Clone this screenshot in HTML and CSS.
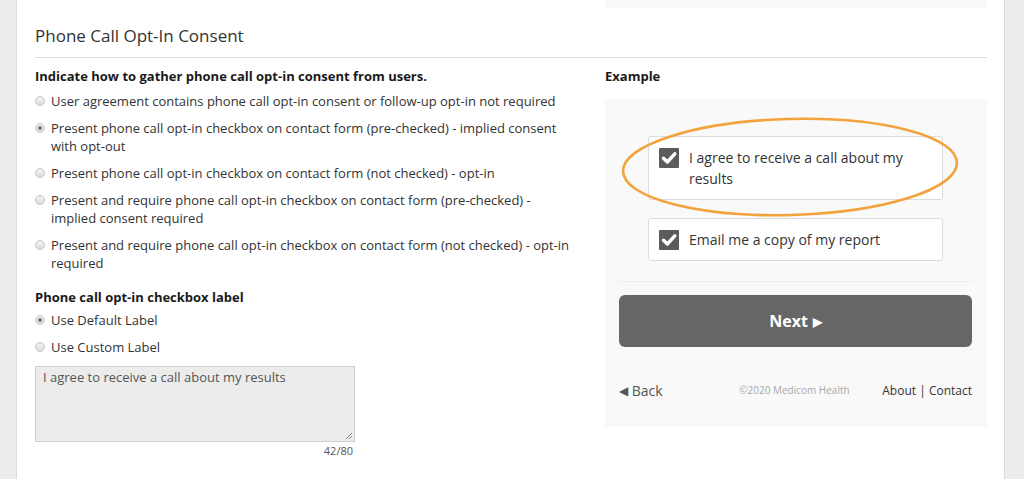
FILE: index.html
```html
<!DOCTYPE html>
<html>
<head>
<meta charset="utf-8">
<link rel="stylesheet" href="styles.css">
</head>
<body>
<div class="page">
  <div class="top-row">
    <div class="top-spacer"></div>
    <div class="prev-box"></div>
  </div>
  <h2 class="section-title">Phone Call Opt-In Consent</h2>
  <div class="columns">
    <div class="left-col">
      <div class="field-title">Indicate how to gather phone call opt-in consent from users.</div>
      <div class="radio-item"><span class="radio"></span><span class="radio-text">User agreement contains phone call opt-in consent or follow-up opt-in not required</span></div>
      <div class="radio-item"><span class="radio checked"></span><span class="radio-text">Present phone call opt-in checkbox on contact form (pre-checked) - implied consent with opt-out</span></div>
      <div class="radio-item"><span class="radio"></span><span class="radio-text">Present phone call opt-in checkbox on contact form (not checked) - opt-in</span></div>
      <div class="radio-item"><span class="radio"></span><span class="radio-text">Present and require phone call opt-in checkbox on contact form (pre-checked) - implied consent required</span></div>
      <div class="radio-item"><span class="radio"></span><span class="radio-text">Present and require phone call opt-in checkbox on contact form (not checked) - opt-in required</span></div>

      <div class="field-title second">Phone call opt-in checkbox label</div>
      <div class="radio-item tight"><span class="radio checked"></span><span class="radio-text">Use Default Label</span></div>
      <div class="radio-item"><span class="radio"></span><span class="radio-text">Use Custom Label</span></div>
      <div class="textarea-wrap">
        <div class="textarea">I agree to receive a call about my results<span class="grip"></span></div>
        <div class="counter">42/80</div>
      </div>
    </div>
    <div class="right-col">
      <div class="field-title example-title">Example</div>
      <div class="example-box">
        <div class="check-card">
          <span class="checkbox"><svg viewBox="0 0 20 20" width="20" height="20"><path d="M4.5 10.2 L8.4 14 L15.8 5.8" fill="none" stroke="#fff" stroke-width="3.4" stroke-linecap="round" stroke-linejoin="round"/></svg></span>
          <span class="check-text">I agree to receive a call about my results</span>
        </div>
        <div class="check-card">
          <span class="checkbox"><svg viewBox="0 0 20 20" width="20" height="20"><path d="M4.5 10.2 L8.4 14 L15.8 5.8" fill="none" stroke="#fff" stroke-width="3.4" stroke-linecap="round" stroke-linejoin="round"/></svg></span>
          <span class="check-text">Email me a copy of my report</span>
        </div>
        <div class="separator"></div>
        <div class="next-btn">Next <span class="tri">&#9654;</span></div>
        <div class="footer">
          <span class="back"><span class="tri-back">&#9664;</span> Back</span>
          <span class="copy">&copy;2020 Medicom Health</span>
          <span class="links">About | Contact</span>
        </div>
        <svg class="highlight" width="350" height="110" viewBox="0 0 350 110">
          <ellipse cx="175" cy="55" rx="167" ry="48" transform="rotate(-1.5 175 55)" fill="none" stroke="#f2a33c" stroke-width="2.6"/>
        </svg>
      </div>
    </div>
  </div>
</div>
</body>
</html>
```

FILE: styles.css
```css
html, body {
  margin: 0;
  padding: 0;
}
body {
  background: #ececec;
  font-family: "Open Sans", "Liberation Sans", sans-serif;
  color: #333;
  width: 1024px;
  height: 479px;
  overflow: hidden;
}
.page {
  margin: 0 19px 0 16px;
  background: #fff;
  border-left: 1px solid #dcdcdc;
  border-right: 1px solid #dcdcdc;
  height: 479px;
  padding: 0 17px 0 18px;
  box-sizing: border-box;
}
.top-row {
  display: flex;
  height: 8px;
}
.top-spacer {
  flex: 0 0 570px;
}
.prev-box {
  flex: 1;
  background: #f9f9f9;
}
.section-title {
  margin: 16px 0 0;
  font-size: 17px;
  font-weight: 400;
  line-height: 24px;
  color: #333;
  padding-bottom: 9px;
  border-bottom: 1px solid #dddddd;
}
.columns {
  display: flex;
  gap: 30px;
}
.left-col {
  flex: 0 0 540px;
}
.right-col {
  flex: 1;
}
.field-title {
  font-size: 13px;
  font-weight: 700;
  line-height: 18px;
  color: #1a1a1a;
  margin-top: 9px;
  margin-bottom: 7px;
  white-space: nowrap;
}
.field-title.second {
  margin-top: 16px;
  margin-bottom: 5px;
}
.radio-item {
  display: flex;
  align-items: flex-start;
  font-size: 13px;
  line-height: 18px;
  margin-bottom: 9px;
}
.radio {
  flex: 0 0 auto;
  width: 8px;
  height: 8px;
  margin-top: 4px;
  margin-right: 6px;
  border: 1px solid #c4c4c4;
  border-radius: 50%;
  background: linear-gradient(#f3f3f3, #dcdcdc);
  position: relative;
}
.radio.checked::after {
  content: "";
  position: absolute;
  left: 2px;
  top: 2px;
  width: 4px;
  height: 4px;
  border-radius: 50%;
  background: #777;
}
.radio-text {
  color: #333;
}
.textarea-wrap {
  width: 320px;
  margin-top: 10px;
}
.textarea {
  background: #ececec;
  border: 1px solid #cfcfcf;
  font-size: 13px;
  line-height: 18px;
  color: #555;
  padding: 1px 7px;
  box-sizing: border-box;
  height: 76px;
  position: relative;
}
.grip {
  position: absolute;
  right: 2px;
  bottom: 2px;
  width: 6px;
  height: 6px;
  background: linear-gradient(135deg, transparent 45%, #888 45%, #888 55%, transparent 55%, transparent 70%, #888 70%, #888 80%, transparent 80%);
}
.counter {
  text-align: right;
  font-size: 11px;
  line-height: 14px;
  color: #555;
  margin-top: 2px;
  padding-right: 2px;
}
.example-title {
  margin-bottom: 14px;
}
.example-box {
  position: relative;
  background: #f9f9f9;
  padding: 37px 15px 27px 14px;
}
.check-card {
  display: flex;
  align-items: flex-start;
  margin: 0 29px 18px 29px;
  background: #fff;
  border: 1px solid #dcdcdc;
  border-radius: 3px;
  padding: 10px;
}
.checkbox {
  flex: 0 0 20px;
  width: 20px;
  height: 20px;
  background: #5b5b5b;
  border-radius: 1px;
  margin-right: 10px;
  margin-top: 1px;
}
.checkbox svg {
  display: block;
}
.check-text {
  font-size: 14px;
  line-height: 21px;
  color: #333;
}
.separator {
  border-top: 1px dotted #e2e2e2;
  margin-top: 20px;
  margin-bottom: 13px;
}
.next-btn {
  height: 52px;
  background: #666;
  border-radius: 6px;
  color: #fff;
  font-size: 16px;
  font-weight: 700;
  display: flex;
  align-items: center;
  justify-content: center;
  gap: 5px;
}
.next-btn .tri {
  font-size: 12px;
}
.footer {
  display: flex;
  justify-content: space-between;
  align-items: center;
  margin-top: 33px;
  height: 20px;
}
.back {
  font-size: 14px;
  color: #555;
}
.tri-back {
  font-size: 12px;
  vertical-align: 1px;
}
.copy {
  font-size: 10px;
  color: #a8a8a8;
  margin-left: 44px;
}
.links {
  font-size: 12px;
  color: #333;
}
.highlight {
  position: absolute;
  left: 10px;
  top: 13px;
  pointer-events: none;
}
```
